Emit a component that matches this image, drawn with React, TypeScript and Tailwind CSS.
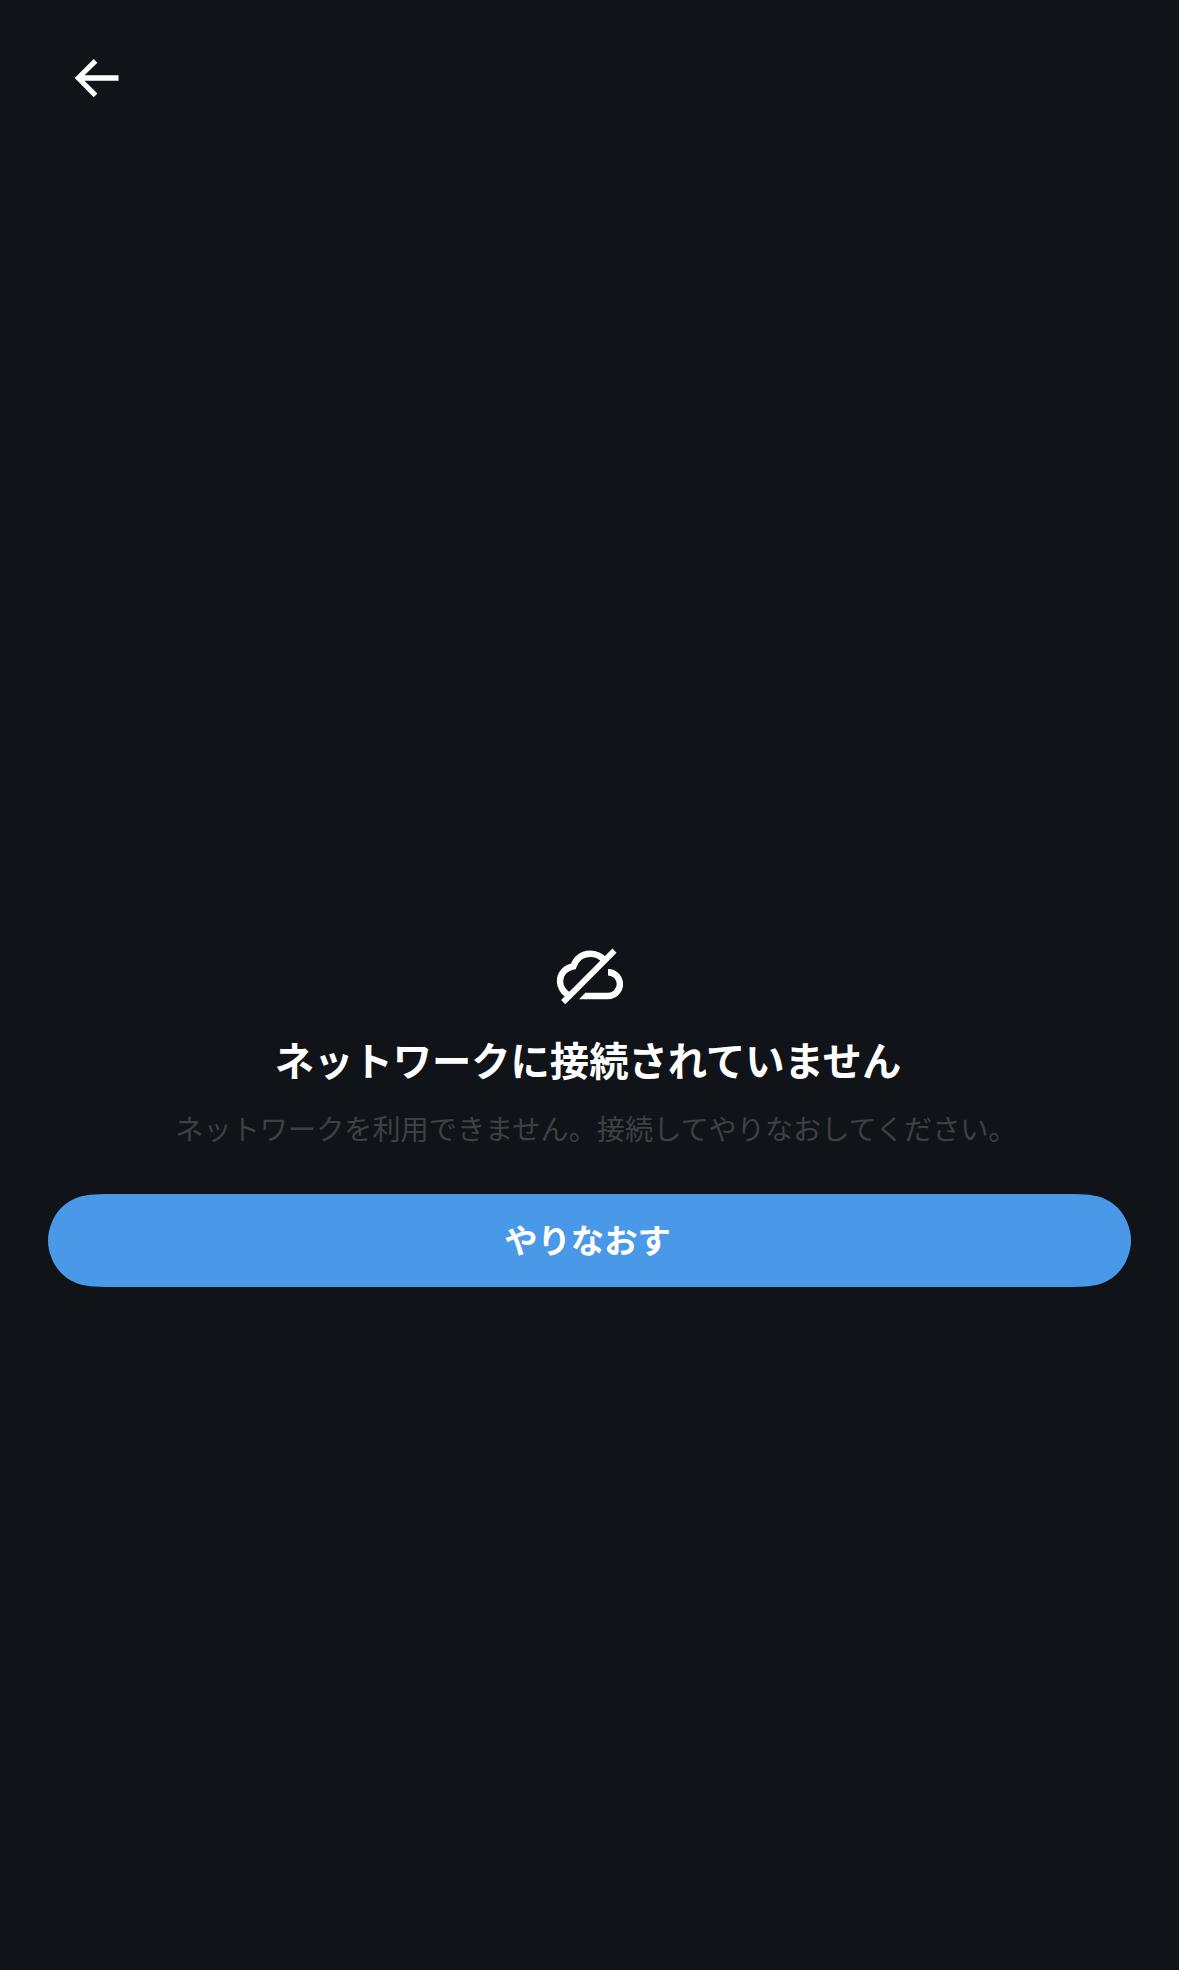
import { MouseEvent } from "react";

const ArrowBack = () => (
  <svg viewBox="0 0 24 24" className="w-[60px] h-[60px] fill-white" aria-hidden="true">
    <path d="M7.414 13.1l5.15 5.05-1.5 1.5L3.5 12l7.564-7.65 1.5 1.5L7.414 10.9H21v2.2H7.414z" />
  </svg>
);

const CloudOff = () => (
  <svg viewBox="0 0 100 80" className="w-[100px] h-[80px]" fill="none" stroke="#fff" strokeWidth="6.4" aria-hidden="true">
    {/* left side and top of the cloud */}
    <path d="M29.5 60.5C23.5 58 20 52 20 46.3C20 38.6 25.6 32.6 33.4 31.3C36 23.7 42.3 18.7 50 18.7C55.5 18.7 60.6 20.8 64.5 25.3" />
    {/* right side */}
    <path d="M68 37.2a11.9 11.9 0 0 1 0 23.8H45" />
    <path d="M39 64.2L45.4 57.8V64.2z" fill="#fff" stroke="none" />
    <path d="M23.2 67.2L74.5 15.7" strokeWidth="5.9" />
  </svg>
);

export default function App() {
  const handleRetry = (e: MouseEvent<HTMLButtonElement>) => {
    e.preventDefault();
    window.location.reload();
  };

  return (
    <div className="flex flex-col h-[1970px] bg-[#101418] text-white font-['Noto_Sans_CJK_JP',sans-serif]">
      <header className="px-[66px] pt-[48px]">
        <button type="button" aria-label="戻る" className="block cursor-pointer">
          <ArrowBack />
        </button>
      </header>
      {/* message */}
      <main className="flex flex-col items-center px-12 pt-[827px]">
        <CloudOff />
        <h1 className="mt-[15px] pr-[3px] font-[700] text-[39.3px] leading-[58px] whitespace-nowrap">
          ネットワークに接続されていません
        </h1>
        <p className="mt-[19px] pl-[13px] font-[400] text-[28.17px] leading-[42px] text-[#3d4144] whitespace-nowrap">
          ネットワークを利用できません。接続してやりなおしてください。
        </p>
        {/* pill with smooth corners */}
        <button
          type="button"
          onClick={handleRetry}
          className="mt-[45px] w-full h-[93px] pr-[4px] pb-[4px] bg-[#4a99e9] font-[700] text-[33.3px] leading-[50px] cursor-pointer [clip-path:path('M71_0H1012C1032.4_0_1042.6_0_1053.7_3.5C1065.7_7.9_1075.1_17.3_1079.5_29.3C1081.8_34.8_1083_40.4_1083_46.5C1083_52.6_1081.8_58.2_1079.5_63.7C1075.1_75.7_1065.7_85.1_1053.7_89.5C1042.6_93_1032.4_93_1012_93H71C50.6_93_40.4_93_29.3_89.5C17.3_85.1_7.9_75.7_3.5_63.7C1.2_58.2_0_52.6_0_46.5C0_40.4_1.2_34.8_3.5_29.3C7.9_17.3_17.3_7.9_29.3_3.5C40.4_0_50.6_0_71_0Z')]"
        >
          やりなおす
        </button>
      </main>
    </div>
  );
}
